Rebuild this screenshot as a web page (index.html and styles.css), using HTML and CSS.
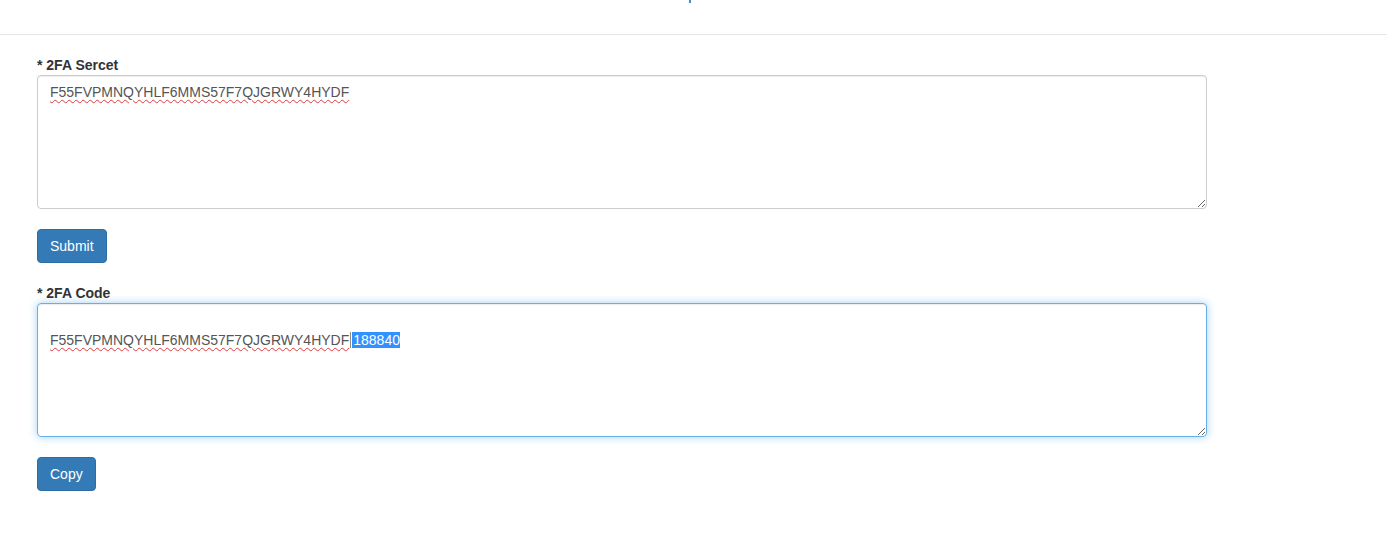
FILE: index.html
```html
<!DOCTYPE html>
<html lang="en">
<head>
    <meta charset="UTF-8">
    <title>2FA</title>
    <link rel="stylesheet" href="styles.css">
</head>
<body>

    <!-- Top bar (title scrolled out of view) -->
    <div class="top-bar">
        <span class="title-tail"></span>
    </div>

    <div id="main-page">
        <label class="field-label">* 2FA Sercet</label>
        <div class="text-box"><span class="misspelled">F55FVPMNQYHLF6MMS57F7QJGRWY4HYDF</span></div>
        <button class="btn">Submit</button>

        <label class="field-label">* 2FA Code</label>
        <div class="text-box focused"><br><span class="misspelled">F55FVPMNQYHLF6MMS57F7QJGRWY4HYDF</span><span class="caret"></span><span class="selected">188840</span></div>
        <button class="btn">Copy</button>
    </div>

</body>
</html>
```

FILE: styles.css
```css
body {
    font-family: 'Liberation Sans', Arial, sans-serif;
    font-size: 14px;
    line-height: 20px;
    color: #333;
    background-color: #fff;
    margin: 0;
    padding: 0;
}

.top-bar {
    height: 34px;
    border-bottom: 1px solid #e7e7e7;
}

.title-tail {
    display: block;
    width: 2px;
    height: 3px;
    margin-left: 689px;
    background-color: #4a8cd0;
}

#main-page {
    padding: 20px 0 0 37px;
}

.field-label {
    display: block;
    font-weight: bold;
    height: 20px;
}

.text-box {
    width: 1144px;
    height: 120px;
    padding: 6px 12px;
    border: 1px solid #ccc;
    border-radius: 4px;
    color: #555;
    box-shadow: inset 0 1px 1px rgba(0, 0, 0, 0.075);
    overflow: auto;
    resize: vertical;
}

.text-box.focused {
    border-color: #66afe9;
    box-shadow: inset 0 1px 1px rgba(0, 0, 0, 0.075), 0 0 8px rgba(102, 175, 233, 0.6);
}

.misspelled {
    text-decoration: underline wavy #e0393e;
    text-decoration-thickness: 1px;
    text-underline-offset: 2px;
}

.caret {
    display: inline-block;
    width: 1px;
    height: 16px;
    margin: 0 1px;
    vertical-align: -3px;
    background-color: #9a8a78;
}

.selected {
    padding-left: 1px;
    background-color: #3390ff;
    color: #fff;
}

.btn {
    display: block;
    margin: 20px 0;
    padding: 6px 12px;
    font-family: inherit;
    font-size: 14px;
    line-height: 20px;
    color: #fff;
    background-color: #337ab7;
    border: 1px solid #2e6da4;
    border-radius: 4px;
    cursor: pointer;
}

.btn:hover {
    background-color: #286090;
}
```
